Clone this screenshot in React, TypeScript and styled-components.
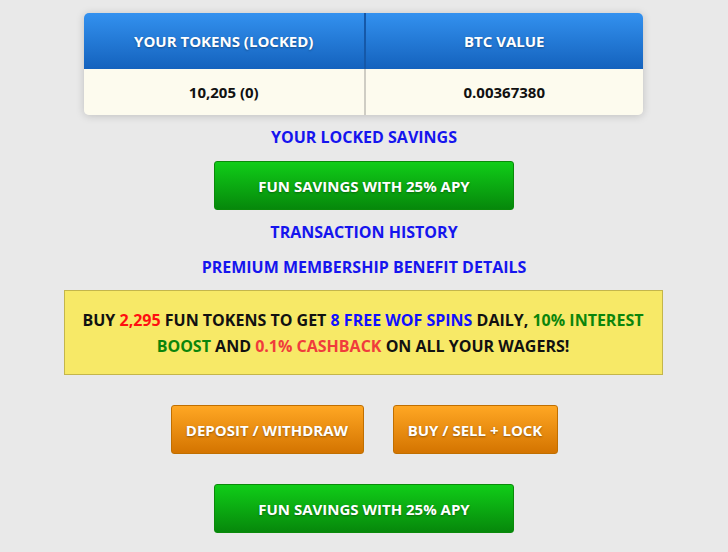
import * as React from "react";
import styled, { createGlobalStyle, css } from "styled-components";

const GlobalStyle = createGlobalStyle`
  html, body {
    margin: 0;
    padding: 0;
    background: #e9e9e9;
    font-family: "Open Sans", "Liberation Sans", sans-serif;
  }
`;

const Page = styled.div`
  width: 728px;
  min-height: 552px;
  box-sizing: border-box;
  padding-top: 13px;
  display: flex;
  flex-direction: column;
  align-items: center;
`;

const TokenTable = styled.div`
  width: 559px;
  margin-right: 1px;
  border-radius: 5px;
  overflow: hidden;
  box-shadow: 0 1px 8px rgba(0, 0, 0, 0.18);
  display: grid;
  grid-template-columns: 1fr 1fr;
`;

const HeadCell = styled.div`
  height: 56px;
  display: flex;
  align-items: center;
  justify-content: center;
  background: linear-gradient(#3391ef, #1462bd);
  color: #fff;
  font-weight: 700;
  font-size: 15px;
  text-shadow: 0 1px 2px rgba(0, 0, 0, 0.35);
  & + & {
    border-left: 2px solid #1558a8;
  }
`;

const BodyCell = styled.div`
  height: 46px;
  display: flex;
  align-items: center;
  justify-content: center;
  background: #fdfbee;
  color: #111;
  font-weight: 700;
  font-size: 15px;
  &:nth-child(4) {
    border-left: 2px solid #cfcdc4;
  }
`;

const BlueLink = styled.a<{ $top: number }>`
  margin-top: ${({ $top }) => $top}px;
  color: #1515ee;
  font-weight: 700;
  font-size: 16px;
  line-height: 22px;
  text-decoration: none;
  cursor: pointer;
`;

const buttonBase = css`
  height: 49px;
  box-sizing: border-box;
  border-radius: 3px;
  display: flex;
  align-items: center;
  justify-content: center;
  color: #fff;
  font-family: inherit;
  font-weight: 700;
  font-size: 15px;
  text-shadow: 0 1px 2px rgba(0, 0, 0, 0.35);
  cursor: pointer;
`;

const GreenButton = styled.button<{ $top: number }>`
  ${buttonBase};
  margin-top: ${({ $top }) => $top}px;
  width: 300px;
  border: 1px solid #0a8a0a;
  background: linear-gradient(#10cd18, #06880b);
`;

const OrangeButton = styled.button<{ $width: number }>`
  ${buttonBase};
  width: ${({ $width }) => $width}px;
  border: 1px solid #c06f00;
  background: linear-gradient(#ffa723, #d47400);
`;

const ButtonRow = styled.div`
  margin-top: 30px;
  display: flex;
  gap: 29px;
`;

const Notice = styled.div`
  margin-top: 12px;
  margin-right: 2px;
  width: 599px;
  height: 85px;
  box-sizing: border-box;
  background: #f7e967;
  border: 1px solid #c4b64b;
  display: flex;
  align-items: center;
  justify-content: center;
  text-align: center;
  padding: 0 16px;
  color: #111;
  font-weight: 700;
  font-size: 16px;
  line-height: 26px;
`;

const Hl = styled.span<{ $color: string }>`
  color: ${({ $color }) => $color};
`;

export default function App() {
  return (
    <Page>
      <GlobalStyle />
      <TokenTable>
        <HeadCell>YOUR TOKENS (LOCKED)</HeadCell>
        <HeadCell>BTC VALUE</HeadCell>
        <BodyCell>10,205 (0)</BodyCell>
        <BodyCell>0.00367380</BodyCell>
      </TokenTable>
      <BlueLink $top={11}>YOUR LOCKED SAVINGS</BlueLink>
      <GreenButton $top={13}>FUN SAVINGS WITH 25% APY</GreenButton>
      <BlueLink $top={11}>TRANSACTION HISTORY</BlueLink>
      <BlueLink $top={13}>PREMIUM MEMBERSHIP BENEFIT DETAILS</BlueLink>
      <Notice>
        <div>
          BUY <Hl $color="#ff1010">2,295</Hl> FUN TOKENS TO GET{" "}
          <Hl $color="#1010ff">8 FREE WOF SPINS</Hl> DAILY,{" "}
          <Hl $color="#0b850b">10% INTEREST</Hl>
          <br />
          <Hl $color="#0b850b">BOOST</Hl> AND{" "}
          <Hl $color="#f03c3c">0.1% CASHBACK</Hl> ON ALL YOUR WAGERS!
        </div>
      </Notice>
      <ButtonRow>
        <OrangeButton $width={193}>DEPOSIT / WITHDRAW</OrangeButton>
        <OrangeButton $width={165}>BUY / SELL + LOCK</OrangeButton>
      </ButtonRow>
      <GreenButton $top={30}>FUN SAVINGS WITH 25% APY</GreenButton>
    </Page>
  );
}
